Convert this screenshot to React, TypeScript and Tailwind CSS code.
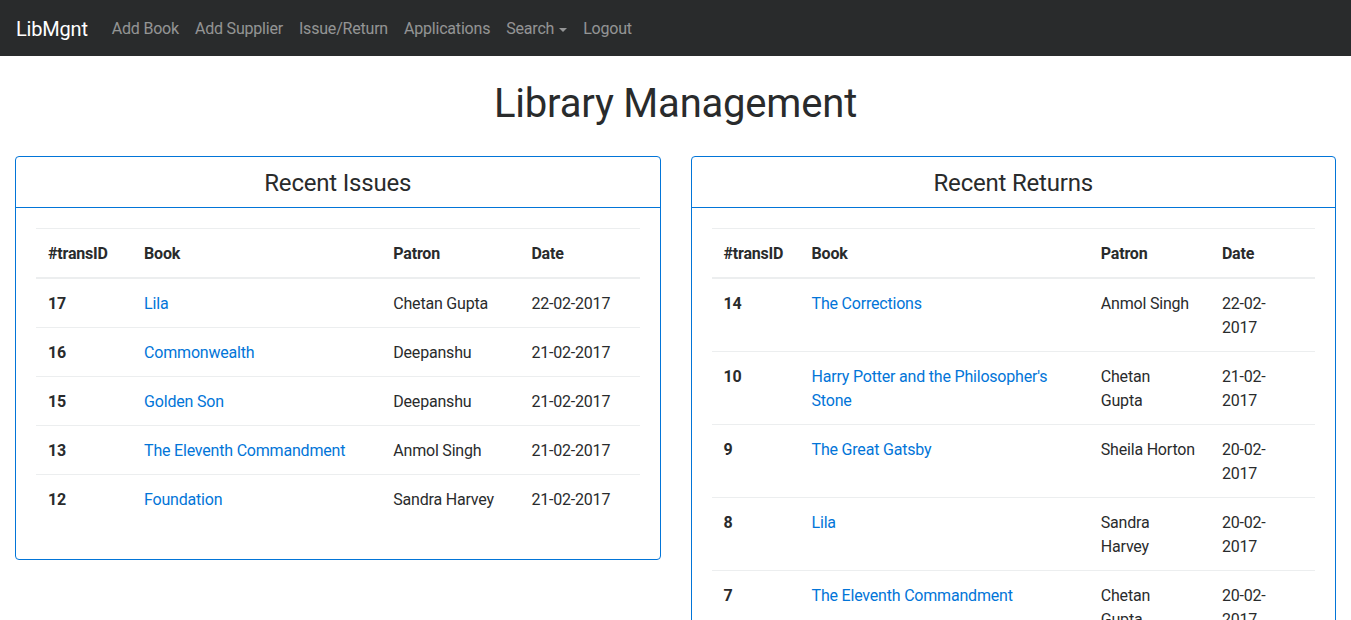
type Row = { id: string; book: string; patron: string[]; date: string[] };

const issues: Row[] = [
  { id: '17', book: 'Lila', patron: ['Chetan Gupta'], date: ['22-02-2017'] },
  { id: '16', book: 'Commonwealth', patron: ['Deepanshu'], date: ['21-02-2017'] },
  { id: '15', book: 'Golden Son', patron: ['Deepanshu'], date: ['21-02-2017'] },
  { id: '13', book: 'The Eleventh Commandment', patron: ['Anmol Singh'], date: ['21-02-2017'] },
  { id: '12', book: 'Foundation', patron: ['Sandra Harvey'], date: ['21-02-2017'] },
];

const returns: Row[] = [
  { id: '14', book: 'The Corrections', patron: ['Anmol Singh'], date: ['22-02-', '2017'] },
  { id: '10', book: "Harry Potter and the Philosopher's Stone", patron: ['Chetan', 'Gupta'], date: ['21-02-', '2017'] },
  { id: '9', book: 'The Great Gatsby', patron: ['Sheila Horton'], date: ['20-02-', '2017'] },
  { id: '8', book: 'Lila', patron: ['Sandra', 'Harvey'], date: ['20-02-', '2017'] },
  { id: '7', book: 'The Eleventh Commandment', patron: ['Chetan', 'Gupta'], date: ['20-02-', '2017'] },
];

const Lines = ({ parts }: { parts: string[] }) => (
  <>
    {parts.map((p, i) => (
      <span key={i} className="block whitespace-nowrap">{p}</span>
    ))}
  </>
);

const TransTable = ({ rows, cols }: { rows: Row[]; cols: string[] }) => (
  <table className="w-full table-fixed border-collapse mb-4 text-left">
    <colgroup>
      {cols.map((w, i) => (
        <col key={i} style={{ width: w }} />
      ))}
    </colgroup>
    <thead>
      <tr className="border-t border-[#eceeef]">
        <th className="px-3 pt-[13px] pb-[11px] font-bold align-bottom border-b-2 border-[#eceeef]">#transID</th>
        <th className="px-3 pt-[13px] pb-[11px] font-bold align-bottom border-b-2 border-[#eceeef]">Book</th>
        <th className="px-3 pt-[13px] pb-[11px] font-bold align-bottom border-b-2 border-[#eceeef]">Patron</th>
        <th className="px-3 pt-[13px] pb-[11px] font-bold align-bottom border-b-2 border-[#eceeef]">Date</th>
      </tr>
    </thead>
    <tbody>
      {rows.map((r, i) => (
        <tr key={r.id} className={i > 0 ? 'border-t border-[#eceeef]' : ''}>
          <th className="px-3 pt-[13px] pb-[11px] font-bold align-top">{r.id}</th>
          <td className="px-3 pt-[13px] pb-[11px] align-top">
            <a href="#" className="text-[#0275d8]">{r.book}</a>
          </td>
          <td className="px-3 pt-[13px] pb-[11px] align-top">
            <Lines parts={r.patron} />
          </td>
          <td className="px-3 pt-[13px] pb-[11px] align-top">
            <Lines parts={r.date} />
          </td>
        </tr>
      ))}
    </tbody>
  </table>
);

const Card = ({ title, children }: { title: string; children: React.ReactNode }) => (
  <div className="border border-[#0275d8] rounded-[4px] bg-white">
    <div className="border-b border-[#0275d8] px-5 pt-[13px] pb-[11px] text-center text-2xl leading-[1.1] font-normal">
      {title}
    </div>
    <div className="p-5">{children}</div>
  </div>
);

export default function App() {
  return (
    <div
      className="min-h-[620px] bg-white text-[#292b2c] text-base leading-6 tracking-[-0.0125em]"
      style={{ fontFamily: 'Roboto, "Liberation Sans", Arial, sans-serif' }}
    >
      <nav className="h-14 bg-[#292b2c] px-4 pt-[2px] flex items-center">
        <a href="#" className="text-white text-xl mr-4 leading-[1.5]">LibMgnt</a>
        <ul className="flex items-center">
          {['Add Book', 'Add Supplier', 'Issue/Return', 'Applications'].map((l) => (
            <li key={l}>
              <a href="#" className="px-2 text-white/50">{l}</a>
            </li>
          ))}
          <li>
            <a href="#" className="px-2 text-white/50 inline-flex items-center">
              Search
              <span className="ml-[5px] mt-[2px] w-0 h-0 border-x-[4px] border-x-transparent border-t-[4px] border-t-white/50" />
            </a>
          </li>
          <li>
            <a href="#" className="px-2 text-white/50">Logout</a>
          </li>
        </ul>
      </nav>
      <h1 className="text-center text-[40px] leading-[1.1] font-normal mt-[26px] mb-[30px]">Library Management</h1>
      <div className="px-[15px] flex gap-[30px] items-start">
        <div className="flex-1">
          <Card title="Recent Issues">
            <TransTable rows={issues} cols={['96px', '249px', '138px', '120px']} />
          </Card>
        </div>
        <div className="flex-1">
          <Card title="Recent Returns">
            <TransTable rows={returns} cols={['88px', '289px', '121px', '105px']} />
          </Card>
        </div>
      </div>
    </div>
  );
}
